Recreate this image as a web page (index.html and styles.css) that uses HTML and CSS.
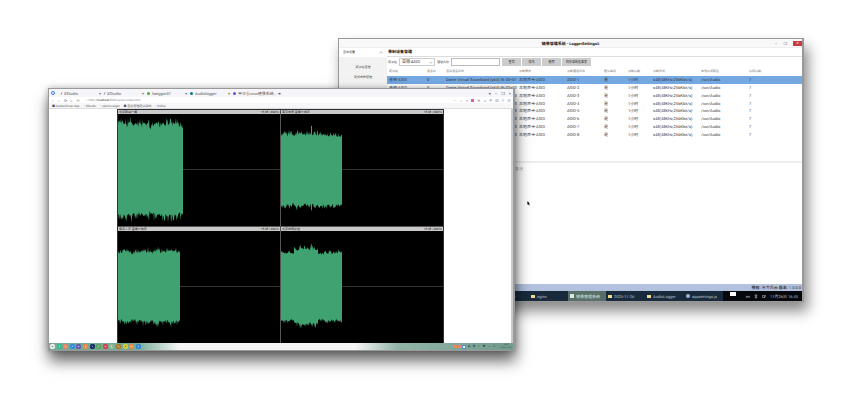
FILE: index.html
```html
<!DOCTYPE html>
<html lang="en">
<head>
<meta charset="utf-8">
<title>链录管理系统</title>
<link rel="stylesheet" href="styles.css">
</head>
<body>
<main class="desktop">
<section class="window settings">
  <header class="titlebar"><span class="grow"></span><strong>链录管理系统 - LoggerSettings5</strong><span class="grow controls"><i>–</i><i>❐</i><button class="close" aria-label="关闭">×</button></span></header>
  <div class="settings-body">
    <nav class="sidebar">
      <a class="side-head" href="#"><span>基本设置</span><svg viewBox="0 0 8 5"><path d="M1 4L4 1L7 4"/></svg></a>
      <a href="#">链录组管理</a><a href="#">链式参数管理</a>
    </nav>
    <div class="content">
      <h1>录制设备管理</h1>
      <form class="toolbar">
        <label for="grp">链录组</label><span class="picker"><select id="grp"><option>音频-ASIO</option></select><svg viewBox="0 0 8 5"><path d="M1 1L4 4L7 1"/></svg></span>
        <label for="name">通道名称</label><input id="name" type="text">
        <span class="buttons"><button type="button">查询</button><button type="button">修改</button><button type="button">删除</button><button type="button" class="wide">同步录制设备表</button></span>
      </form>
      <table>
        <colgroup><col class="c1"><col class="c2"><col class="c3"><col class="c4"><col class="c5"><col class="c6"><col class="c7"><col class="c8"><col class="c9"><col></colgroup>
        <thead><tr><th>链录组</th><th>设备ID</th><th>音频设备名称</th><th>录制模式</th><th>录制通道名称</th><th>是否启用</th><th>录制周期</th><th>录制格式</th><th>本地存储路径</th><th>存储周期</th></tr></thead>
        <tbody id="rows"></tbody>
      </table>
      <div class="note">备注</div>
    </div>
  </div>
  <footer class="status"><span>授权:</span> 东方风云 <span>版本:</span> 1.0.0.0</footer>
  <footer class="taskbar">
    <span class="task first">—</span><span class="task"><i class="folder"></i>nginx</span><span class="task active"><i class="app"></i>链录管理系统</span><span class="task"><i class="folder"></i>2025-11-26</span><span class="task"><i class="folder"></i>AudioLogger</span><span class="task"><i class="gear"></i>appsettings.js</span>
    <span class="tray"><i class="notice"></i><span>en</span><svg viewBox="0 0 6 8"><path d="M3 1V7M1 3L3 1L5 3M1 5H5"/></svg><svg viewBox="0 0 8 8"><path d="M1 2V6H5V2H1M4 7L7 4V1"/></svg><span>11月26日 16:45</span></span>
  </footer>
  <svg class="cursor" viewBox="0 0 8 12"><path d="M1 0V9L3 7L5 11L7 10L5 6H8Z"/></svg>
</section>

<section class="window browser">
  <header class="tabs">
    <span class="logo"></span>
    <span class="tab"><i class="dot doc"></i>XStudio<b>×</b></span><span class="tab"><i class="dot doc"></i>XStudio<b>×</b></span><span class="tab"><i class="dot green"></i>lianggor07<b>×</b></span><span class="tab"><i class="dot teal"></i>Audiologger<b>×</b></span><span class="tab"><i class="dot violet"></i>平台-[Linux链录系统...<b>×</b></span><b>+</b>
    <span class="win"><i>▾</i><i>–</i><i>❐</i><i>×</i></span>
  </header>
  <div class="address">
    <span class="nav"><i>‹</i><i>›</i><i>⟳</i><i>⌂</i><i>☆</i></span><span class="url">⌁ http://<em>localhost</em>:5000/audio/index.html</span>
    <span class="tools"><i>◦</i><i>‹</i><i>»</i><i class="pink"></i><i>✕</i><i>⌂</i><i>↶</i><i>⊡</i><i>⇩</i><i>≡</i></span>
  </div>
  <div class="bookmarks"><a href="#">■ SystemDriver App</a><a href="#">⁄ XStudio</a><a href="#">⁄ xplorlocalget</a><a href="#">● 音频管理链录系统</a><a href="#">⁄ XCHip</a></div>
  <div class="page">
    <div class="waves">
      <article><header><span>北京新闻广播</span><span>15:45 | 48kHz</span></header><svg data-wave="0"></svg></article>
      <article><header><span>南京体育 直播立体声</span><span>15:45 | 48kHz</span></header><svg data-wave="1"></svg></article>
      <article><header><span>南京人声 直播立体声</span><span>15:45 | 48kHz</span></header><svg data-wave="2"></svg></article>
      <article><header><span>北京体育频道</span><span>15:45 | 48kHz</span></header><svg data-wave="3"></svg></article>
    </div>
    <div class="scroll"></div>
  </div>
  <footer class="dock">
    <span class="apps" id="apps"></span>
    <span class="dock-tray"><i class="r"></i><i class="r"></i><i class="w"></i><i>曲</i><i>✿</i><i>✓</i><i>◆</i><i>▵</i><i>⊙</i><span class="clock"><span>16:45</span><span>2025/11/26</span></span></span>
  </footer>
</section>
</main>
<script src="app.js"></script>
</body>
</html>
```
FILE: styles.css
```css
* { box-sizing: border-box; }
body { margin: 0; background: #fff; font: 4px/7px Roboto, "Noto Sans CJK SC", sans-serif; color: #444; text-rendering: geometricPrecision; }
i, em { font-style: normal; }
a { color: inherit; text-decoration: none; }
svg { display: block; }
button, input, select { font: inherit; color: #333; margin: 0; padding: 0; }
.desktop { position: relative; min-height: 100vh; overflow: hidden; }
.window { position: absolute; display: flex; flex-direction: column; background: #fff; }
.grow { flex: 1; }

/* Settings window */
.settings { left: 338px; right: 49px; top: 38px; height: 264px; border: 1px solid #999; border-width: 1px 2px 1px 1px; box-shadow: 4px 9px 13px #0007; }
.titlebar { display: flex; align-items: center; height: 9px; background: #f8f8f8; border-bottom: 1px solid #eee; color: #111; }
.controls { display: flex; justify-content: flex-end; align-items: center; gap: 6px; color: #777; }
.close { width: 9px; height: 5px; border: 0; background: #c73d42; color: #fff; line-height: 4px; }
.settings-body { display: flex; flex: 1; min-height: 0; }
.sidebar { width: 48px; background: #f2f2f2; text-align: center; font-size: 3px; }
.sidebar a { display: block; padding-top: 3px; }
.sidebar .side-head { display: flex; justify-content: space-between; align-items: center; height: 9px; padding: 0 4px; margin-bottom: 4px; background: #fff; }
.side-head svg { width: 4px; height: 3px; fill: none; stroke: #666; }
.content { flex: 1; min-width: 0; }
h1 { margin: 0; padding-left: 1px; height: 9px; border-bottom: 1px solid #ddd; font-size: 4px; line-height: 7px; color: #111; }
.toolbar { display: flex; align-items: center; height: 10px; padding: 0 1px; gap: 2px; white-space: nowrap; font-size: 3px; }
.picker { position: relative; width: 36px; font-size: 4px; }
.picker select { display: block; appearance: none; width: 100%; height: 8px; padding-left: 2px; border: 1px solid #ccc; border-radius: 0; background: #fff; line-height: 6px; }
.picker svg { position: absolute; right: 2px; top: 3px; width: 4px; height: 3px; fill: none; stroke: #777; }
.toolbar input { width: 49px; height: 8px; border: 1px solid #bbb; }
.buttons { display: flex; gap: 1px; }
.toolbar button { width: 19px; height: 8px; border: 0; background: #ccc; line-height: 7px; }
.toolbar .wide { width: 29px; }
table { width: 100%; height: 71px; table-layout: fixed; border-collapse: collapse; white-space: nowrap; color: #333; margin-bottom: 23px; }
th, td { padding: 0 0 0 2px; text-align: left; line-height: 7px; }
th { height: 9px; font-weight: 400; font-size: 3px; color: #777; }
.selected { background: #73a8e1; }
.c1 { width: 38px; } .c2 { width: 19px; } .c3 { width: 73px; } .c4 { width: 48px; } .c5 { width: 37px; }
.c6 { width: 24px; } .c7 { width: 25px; } .c8 { width: 48px; } .c9 { width: 48px; }
.note { border-top: 2px solid #eee; padding: 1px 0 0 128px; line-height: 9px; color: #999; }
.status { height: 7px; padding-right: 1px; background: #b2c1de; text-align: right; color: #333; line-height: 7px; }
.status span { font-weight: 700; }
.taskbar { display: flex; height: 10px; padding-left: 172px; background: #06080d; color: #bbc4ce; line-height: 9px; }
.task { display: flex; align-items: center; gap: 2px; width: 39px; padding-left: 2px; background: #182a3b; white-space: nowrap; overflow: hidden; }
.task.first { width: 18px; }
.task.active { width: 38px; background: #586f69; color: #e0e8df; }
.folder { width: 4px; height: 3px; background: #efdb8b; }
.app, .gear { width: 4px; height: 4px; background: #dfe9e2; }
.gear { border-radius: 2px; background: #9fb4ce; }
.tray { flex: 1; display: flex; justify-content: flex-end; align-items: center; gap: 4px; padding-right: 4px; white-space: nowrap; }
.tray svg { width: 4px; height: 5px; fill: none; stroke: #ccc; }
.notice { width: 6px; height: 4px; margin: 0 6px 5px 0; background: #fff; }
.cursor { position: absolute; left: 188px; top: 162px; width: 3px; height: 5px; }

/* Browser window */
.browser { left: 48px; right: 338px; top: 88px; height: 263px; border: 1px solid #999; border-right-width: 2px; box-shadow: 1px 10px 14px #0009, 0 0 6px #0004; }
.tabs { display: flex; align-items: center; height: 8px; padding-left: 2px; background: #f5f5fa; white-space: nowrap; color: #555; }
.logo { width: 4px; height: 4px; margin-right: 5px; border: 1px solid #377bea; border-radius: 2px; }
.tab { display: flex; align-items: center; gap: 2px; width: 43px; padding: 0 2px 0 1px; }
.tab b { margin-left: auto; }
.tabs > b { margin-left: 3px; }
.dot { width: 3px; height: 3px; border-radius: 2px; flex: none; }
.doc { width: 1px; background: #999; transform: rotate(25deg); }
.green { background: #55a43b; } .teal { background: #087889; } .violet { background: #694bdd; }
.win { display: flex; gap: 4px; margin-left: auto; padding-right: 2px; }
.address { display: flex; align-items: center; height: 6px; color: #888; white-space: nowrap; }
.url { font-size: 3px; }
.address em { color: #222; }
.nav { display: flex; width: 37px; padding-left: 3px; gap: 3px; color: #666; }
.nav i { width: 3px; }
.tools { display: flex; align-items: center; margin-left: auto; padding-right: 1px; color: #555; }
.tools i { width: 6px; text-align: center; }
.tools .pink { width: 3px; height: 3px; margin: 0 2px 0 1px; background: #e15a9c; }
.bookmarks { display: flex; gap: 4px; height: 6px; padding-left: 3px; background: #f7f7fa; border-bottom: 1px solid #ddd; font-size: 3px; line-height: 6px; white-space: nowrap; color: #555; }
.page { display: flex; flex: 1; min-height: 0; padding-left: 68px; justify-content: space-between; }
.waves { width: 327px; display: grid; grid-template-columns: 1fr 1fr; grid-template-rows: 1fr 1fr; gap: 1px; background: #555; border: 1px solid #333; border-bottom: 0; }
.waves article { display: flex; flex-direction: column; min-width: 0; min-height: 0; background: #000; }
.waves header { display: flex; justify-content: space-between; height: 4px; padding: 0 1px; background: #c9c9c9; color: #222; font-size: 3px; line-height: 4px; white-space: nowrap; }
.waves svg { width: 100%; flex: 1; min-height: 0; }
.waves path { fill: #40a270; }
.waves line { stroke: #333; }
.scroll { width: 2px; background: #c8c8c8; }
.dock { display: flex; justify-content: space-between; height: 7px; padding-left: 1px; background: linear-gradient(90deg, #75aa95 0 19%, #f5f5f5 28% 66%, #93b5a8 75%, #719b8d); }
.apps { display: flex; align-items: center; justify-content: space-between; width: 91px; }
.apps svg { width: 5px; height: 5px; }
.dock-tray { display: flex; align-items: center; gap: 1px; color: #355; }
.dock-tray i { width: 4px; height: 5px; line-height: 5px; font-size: 3px; text-align: center; }
.dock-tray .r { width: 3px; height: 3px; background: #e98861; }
.dock-tray .w { height: 4px; background: #fff; border: 1px solid #4d92dc; }
.clock { display: flex; flex-direction: column; width: 14px; margin-left: 2px; font-size: 2px; line-height: 3px; text-align: center; }
```
FILE: app.js
```js
const rows = document.getElementById("rows");
for (let n = 1; n <= 8; n++) {
  const tr = document.createElement("tr");
  if (n === 1) tr.className = "selected";
  const input = n === 1 ? "00+01" : "02+03";
  const cells = ["音频-ASIO", "0", "Dante Virtual Soundcard (x64) IN " + input, "本地声卡-ASIO",
    "ASIO-" + n, "是", "1小时", "s48(48KHz,256Kbit/s)", "/run/Audio", "7"];
  for (const text of cells) {
    const td = document.createElement("td");
    td.textContent = text;
    tr.append(td);
  }
  rows.append(tr);
}

// Each segment: [start x, end x, top, bottom, spike height]
const waves = [
  [[0, 65, 10, 101, 8]],
  [[0, 30, 20, 92, 5], [30, 31, 11, 97, 1], [31, 37, 20, 92, 5], [37, 61, 21, 92, 4]],
  [[0, 62, 20, 91, 5]],
  [[0, 13, 21, 90, 3], [13, 37, 17, 94, 5], [37, 61, 21, 90, 3]]
];
let seed = 17;
const random = () => (seed = (seed * 16807) % 2147483647) / 2147483647;
document.querySelectorAll("[data-wave]").forEach(svg => {
  const index = Number(svg.dataset.wave);
  const top = [], bottom = [];
  let drift = 0;
  for (const [a, b, t, u, spike] of waves[index]) {
    for (let x = a; x <= b; x += 0.5) {
      drift = drift * 0.7 + (random() - 0.5) * spike * 0.4;
      top.push(x + " " + (t + drift - random() ** 4 * spike + random() * 2));
      bottom.unshift(x + " " + (u - drift + random() ** 4 * spike - random() * 2));
    }
  }
  svg.innerHTML = '<line x1="0" x2="100%" y1="55.5" y2="55.5"/><path d="M' + top.concat(bottom).join("L") + 'Z"/>';
});

const colors = ["#eee", "#2bbd91", "#ed8065", "#3589de", "#665ca8", "#ef8946", "#102a62",
  "#58a45b", "#d44052", "#8dbb99", "#ae7929", "#d7cd36", "#e68a46", "#2886d5"];
const apps = document.getElementById("apps");
colors.forEach((color, n) => {
  const mark = ["M2 3H4", "M3 2V4", "M2 2L4 4", "M2 4L4 2"][n % 4];
  const stroke = n === 0 || n === 11 ? "#333" : "#fff";
  apps.innerHTML += `<svg viewBox="0 0 6 6"><rect width="6" height="6" rx="2" fill="${color}"/><path d="${mark}" stroke="${stroke}" stroke-opacity=".7"/></svg>`;
});
```
